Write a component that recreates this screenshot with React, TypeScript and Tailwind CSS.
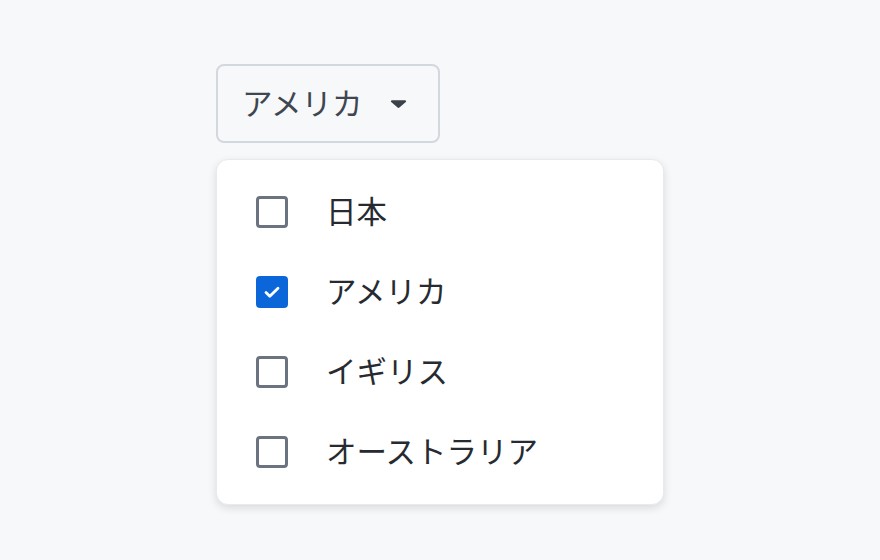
import { useState } from 'react';

const options = ['日本', 'アメリカ', 'イギリス', 'オーストラリア'];

function Checkbox({ checked }: { checked: boolean }) {
  if (checked) {
    return (
      <span className="flex h-8 w-8 shrink-0 items-center justify-center rounded-[4px] bg-[#0b66da]">
        <svg width="24" height="24" viewBox="0 0 24 24" fill="none">
          <path d="M6 12.5l3.8 3.8L18 8.2" stroke="#fff" strokeWidth="2.8" strokeLinecap="round" strokeLinejoin="round" />
        </svg>
      </span>
    );
  }
  return <span className="h-8 w-8 shrink-0 rounded-[4px] border-[3px] border-[#6b7280] bg-white" />;
}

export default function App() {
  const [selected, setSelected] = useState<string[]>(['アメリカ']);

  const toggle = (o: string) =>
    setSelected((s) => (s.includes(o) ? s.filter((x) => x !== o) : [...s, o]));

  return (
    <div
      className="min-h-screen bg-[#f7f8fa] pl-[216px] pt-[64px]"
      style={{ fontFamily: '"Noto Sans CJK JP", "Noto Sans", sans-serif' }}
    >
      <div className="flex flex-col items-start gap-[16px]">
        <button className="flex h-[79px] items-center gap-[28px] rounded-[8px] border-2 border-[#d3d7de] bg-[#f7f8fa] pl-[24px] pr-[31px] text-[30.5px] leading-none text-[#3f4650]">
          <span className="-mt-[2px]">{selected[0] ?? 'アメリカ'}</span>
          <svg width="17" height="11" viewBox="0 0 17 11">
            <path d="M2 2.2h13c1 0 1.5 1.1.8 1.8L9.4 9.6c-.5.4-1.3.4-1.8 0L1.2 4C.5 3.3 1 2.2 2 2.2z" fill="#3a414b" />
          </svg>
        </button>

        <div className="w-[448px] rounded-[12px] border border-[#e8eaee] bg-white py-[12px] shadow-[0_3px_8px_rgba(0,0,0,0.12)]">
          {options.map((o) => (
            <label
              key={o}
              onClick={() => toggle(o)}
              className="flex h-[80px] cursor-pointer items-center gap-[38px] pl-[39px] text-[30.5px] leading-none text-[#272b31]"
            >
              <Checkbox checked={selected.includes(o)} />
              <span className="-mt-[3px]">{o}</span>
            </label>
          ))}
        </div>
      </div>
    </div>
  );
}
